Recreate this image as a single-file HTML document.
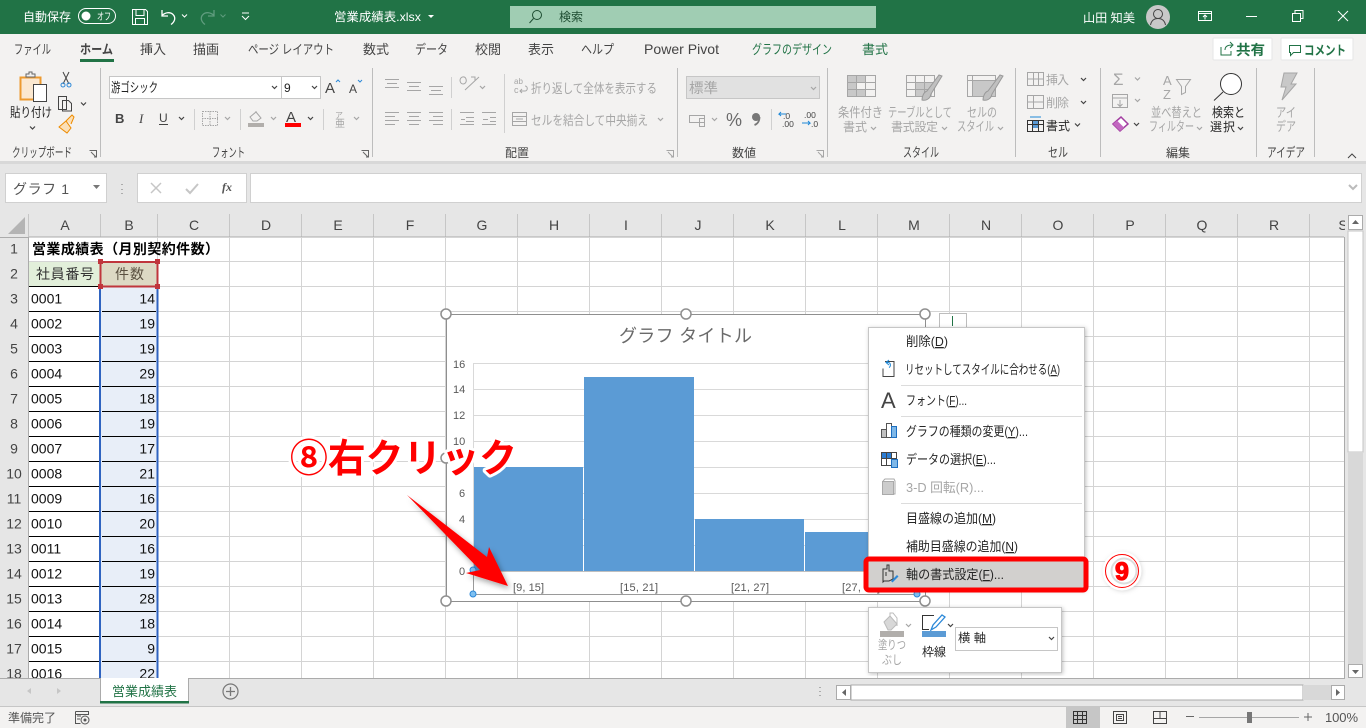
<!DOCTYPE html>
<html lang="ja"><head><meta charset="utf-8"><title>営業成績表.xlsx</title>
<style>
html,body{margin:0;padding:0;width:1366px;height:728px;overflow:hidden;background:#fff}
svg{display:block}
text{font-family:"Liberation Sans","Noto Sans CJK JP",sans-serif;font-size:12px;fill:#444;white-space:pre}
text.n{font-size:13px}
.w text,text.w{fill:#fff}
.g text{fill:#a6a6a6}
.k text{fill:#262626}
.h text{font-size:14px;fill:#444;text-anchor:middle}
.c text{font-size:14px;fill:#111}
.r text{font-size:14px;fill:#111;text-anchor:end}
.m text{fill:#262626;font-size:13px}
.y text{font-size:11px;fill:#595959}
.ic{fill:none;stroke:#a6a6a6;stroke-width:1}
.ik{fill:none;stroke:#444;stroke-width:1}
.ch{fill:none;stroke:#444;stroke-width:1.2}
.cg{fill:none;stroke:#a6a6a6;stroke-width:1.2}
.ann{font-weight:700;fill:#f00;stroke:#fff;stroke-width:6px;paint-order:stroke;stroke-linejoin:round}
</style></head><body>
<svg width="1366" height="728" viewBox="0 0 1366 728" xmlns="http://www.w3.org/2000/svg">
<defs>
<filter id="ds" x="-20%" y="-20%" width="150%" height="150%"><feDropShadow dx="2" dy="3" stdDeviation="3" flood-color="#000" flood-opacity=".35"/></filter>
<filter id="ms" x="-5%" y="-5%" width="110%" height="110%"><feDropShadow dx="1" dy="1" stdDeviation="2" flood-color="#000" flood-opacity=".25"/></filter>
<filter id="rs" x="-10%" y="-10%" width="120%" height="120%"><feGaussianBlur stdDeviation="2.5"/></filter>
</defs>

<!-- sheet background -->
<rect width="1366" height="728" fill="#e6e6e6"/>
<rect x="29" y="237" width="1316" height="441" fill="#fff"/>

<!-- title bar -->
<rect width="1366" height="34" fill="#217346"/>
<g class="w">
<text x="23" y="21" textLength="48" lengthAdjust="spacingAndGlyphs">自動保存</text>
<rect x="78.500" y="8.500" width="37" height="15" rx="7.500" fill="none" stroke="#fff"/>
<circle cx="86" cy="16" r="4.500" fill="#fff"/>
<text x="97" y="20" textLength="14" lengthAdjust="spacingAndGlyphs" style="font-size:10px">オフ</text>
<path d="M132.500 9.500h13l2 2v13h-15zM136 9.500v6h8v-6M135.500 24.500v-6h9v6" fill="none" stroke="#fff"/>
<path d="M162 10v6h6M162 15.500c3-3 8-4 11-1 3 3 2 7-2 10" fill="none" stroke="#fff" stroke-width="1.300"/>
<path d="M182 14.500l2.500 2.500 2.500-2.500" fill="none" stroke="#fff"/>
<path d="M214 10v6h-6M214 15.500c-3-3-8-4-11-1-3 3-2 7 2 10" fill="none" stroke="#5f9c7e" stroke-width="1.300"/>
<path d="M220.500 14.500l2.500 2.500 2.500-2.500" fill="none" stroke="#5f9c7e"/>
<path d="M242 13h7M242 16l3.500 3.500 3.500-3.500" fill="none" stroke="#fff"/>
<text x="334" y="21" textLength="87" lengthAdjust="spacingAndGlyphs">営業成績表.xlsx</text>
<path d="M428 15h6l-3 3z" fill="#fff"/>
<text x="1083" y="22" textLength="52" lengthAdjust="spacingAndGlyphs">山田 知美</text>
</g>
<rect x="510" y="6" width="366" height="22" fill="#a0cdb3"/>
<circle cx="537" cy="15" r="4.500" fill="none" stroke="#1e4d32"/>
<path d="M533.500 18.500l-4 4.500" stroke="#1e4d32" fill="none"/>
<text x="559" y="21" textLength="24" style="fill:#1e4d32">検索</text>
<circle cx="1158" cy="17" r="12" fill="#c8c8c8"/>
<circle cx="1158" cy="14" r="4.500" fill="none" stroke="#444"/>
<path d="M1150.500 25c1-5 4-6.500 7.500-6.500s6.500 1.500 7.500 6.500" fill="none" stroke="#444"/>
<g fill="none" stroke="#fff">
<path d="M1198.500 11.500h13v9h-13zM1198.500 13.500h13M1205 19.500v-4M1203 17l2-2 2 2"/>
<path d="M1246 16.500h11"/>
<path d="M1292.500 13.500h8v8h-8zM1295 13v-2.500h8v8h-2.500"/>
<path d="M1338 11l10 10M1348 11l-10 10"/>
</g>

<!-- ribbon -->
<rect y="34" width="1366" height="127" fill="#f3f2f1"/>
<rect y="161" width="1366" height="3" fill="#d8d8d8"/>
<text class="n" x="14" y="54" textLength="37" lengthAdjust="spacingAndGlyphs">ファイル</text>
<text class="n" x="80" y="54" textLength="33" lengthAdjust="spacingAndGlyphs" style="font-weight:700">ホーム</text>
<rect x="80" y="59" width="34" height="3" fill="#217346"/>
<text class="n" x="140" y="54" textLength="26">挿入</text>
<text class="n" x="193" y="54" textLength="26">描画</text>
<text class="n" x="248" y="54" textLength="86" lengthAdjust="spacingAndGlyphs">ページ レイアウト</text>
<text class="n" x="363" y="54" textLength="26">数式</text>
<text class="n" x="415" y="54" textLength="33" lengthAdjust="spacingAndGlyphs">データ</text>
<text class="n" x="475" y="54" textLength="26">校閲</text>
<text class="n" x="528" y="54" textLength="26">表示</text>
<text class="n" x="581" y="54" textLength="33" lengthAdjust="spacingAndGlyphs">ヘルプ</text>
<text x="644" y="54" textLength="75" lengthAdjust="spacingAndGlyphs" style="font-size:14px">Power Pivot</text>
<text class="n" x="752" y="54" textLength="80" lengthAdjust="spacingAndGlyphs" style="fill:#217346">グラフのデザイン</text>
<text class="n" x="862" y="54" textLength="26" style="fill:#217346">書式</text>

<!-- share / comment -->
<rect x="1213" y="38" width="59" height="22" rx="1" fill="#fff" stroke="#e6e6e6"/>
<rect x="1281" y="38" width="72" height="22" rx="1" fill="#fff" stroke="#e6e6e6"/>
<path d="M1221 47v8h10v-4M1225 50c0-3 2-5 7-5M1230 42l3 3-3 3" fill="none" stroke="#217346"/>
<text x="1236" y="55" textLength="29" lengthAdjust="spacingAndGlyphs" style="font-weight:700;fill:#217346;font-size:14px">共有</text>
<path d="M1289.500 45.500h11v7h-7l-3 3v-3h-1z" fill="none" stroke="#217346"/>
<text x="1304" y="55" textLength="42" lengthAdjust="spacingAndGlyphs" style="font-weight:700;fill:#217346;font-size:13px">コメント</text>

<!-- group separators -->
<path d="M100.500 68v89M372.500 68v89M677.500 68v89M827.500 68v89M1015.500 68v89M1100.500 68v89M1256.500 68v89M1314.500 68v89" stroke="#bdbdbd" fill="none"/>
<path d="M194.500 109v21M240.500 109v21M323.500 109v21M451.500 77v21M451.500 109v21M504.500 74v59M771.500 109v21" stroke="#d0d0d0" fill="none"/>

<!-- group labels -->
<text class="n" x="12" y="157" textLength="60" lengthAdjust="spacingAndGlyphs">クリップボード</text>
<text class="n" x="212" y="157" textLength="33" lengthAdjust="spacingAndGlyphs">フォント</text>
<text x="505" y="157" textLength="24">配置</text>
<text x="732" y="157" textLength="24">数値</text>
<text class="n" x="903" y="157" textLength="36" lengthAdjust="spacingAndGlyphs">スタイル</text>
<text class="n" x="1048" y="157" textLength="20" lengthAdjust="spacingAndGlyphs">セル</text>
<text x="1166" y="157" textLength="24">編集</text>
<text class="n" x="1267" y="157" textLength="38" lengthAdjust="spacingAndGlyphs">アイデア</text>
<g class="ik" stroke="#666">
<path d="M89.500 150.500h7v7M91 152l5 5M94 157h2.500v-2.500" stroke="#666"/>
<path d="M361.500 150.500h7v7M363 152l5 5M366 157h2.500v-2.500" stroke="#666"/>
</g>
<path d="M666.500 150.500h7v7M668 152l5 5M671 157h2.500v-2.500" class="ic"/>
<path d="M816.500 150.500h7v7M818 152l5 5M821 157h2.500v-2.500" class="ic"/>
<path d="M1348 158l4-4 4 4" class="ik" stroke-width="1.200"/>

<!-- clipboard -->
<rect x="20.500" y="77.500" width="20" height="22" fill="#fbe8d0" stroke="#ed9a2f" stroke-width="2"/>
<path d="M26 77v-3h3v-2h3v2h3v3z" fill="#f3f2f1" stroke="#666"/>
<rect x="33.500" y="84.500" width="13" height="17" fill="#fff" stroke="#444"/>
<text class="n" x="10" y="117" textLength="42" lengthAdjust="spacingAndGlyphs" style="fill:#262626">貼り付け</text>
<path d="M30 126.500l2.500 2.500 2.500-2.500" class="ch"/>
<path d="M63 72l6 12M69 72l-6 12" fill="none" stroke="#444"/>
<circle cx="63" cy="85" r="2" fill="none" stroke="#2b88d8"/><circle cx="69" cy="85" r="2" fill="none" stroke="#2b88d8"/>
<path d="M58.500 96.500h8v13h-8zM62.500 100.500h6l3 3v7.500h-9z" fill="#f3f2f1" stroke="#444"/>
<path d="M81 102.500l2.500 2.500 2.500-2.500" class="ch"/>
<path d="M59 127l7-6 5 7-4 5zM66 121l6-6 2 2-3 7" fill="#fbe0b8" stroke="#ed8b00"/>

<!-- font -->
<rect x="109.500" y="76.500" width="172" height="22" fill="#fff" stroke="#c6c6c6"/>
<rect x="281.500" y="76.500" width="39" height="22" fill="#fff" stroke="#c6c6c6"/>
<text class="n" x="111" y="92" textLength="47" lengthAdjust="spacingAndGlyphs" style="fill:#222">游ゴシック</text>
<text x="284" y="92" style="fill:#222">9</text>
<path d="M272 86l2.500 2.500 2.500-2.500M312 86l2.500 2.500 2.500-2.500" class="ch"/>
<text x="325" y="93" style="font-size:15px">A</text>
<path d="M336 82l2-2 2 2" fill="none" stroke="#2b88d8"/>
<text x="349" y="93" style="font-size:12px">A</text>
<path d="M358 80l2 2 2-2" fill="none" stroke="#2b88d8"/>
<text x="115" y="123" style="font-weight:700;font-size:13px">B</text>
<text x="139" y="123" style="font-style:italic;font-family:'Liberation Serif',serif;font-size:13px">I</text>
<text x="159" y="122" style="font-size:12px">U</text>
<path d="M159 124.500h9" stroke="#444"/>
<path d="M179 117l2.500 2.500 2.500-2.500" class="ch"/>
<path d="M202.500 111.500h15v14h-15zM210 111v15M202 118.500h16" class="ic" stroke-dasharray="1.500 1"/>
<path d="M225 117l2.500 2.500 2.500-2.500" class="cg"/>
<path d="M250 117l6-5 5 6-4 3h-4zM256 112v-1" class="ic"/>
<rect x="248" y="123" width="16" height="4" fill="#b1aeab"/>
<path d="M271 117l2.500 2.500 2.500-2.500" class="cg"/>
<text x="286" y="122" style="font-size:15px">A</text>
<rect x="285" y="123" width="16" height="4" fill="#f00"/>
<path d="M308 117l2.500 2.500 2.500-2.500" class="ch"/>
<text x="335" y="118" style="font-size:8px;fill:#a6a6a6">ア</text>
<text x="335" y="127" style="font-size:10px;fill:#a6a6a6">亜</text>
<path d="M354 117l2.500 2.500 2.500-2.500" class="cg"/>

<!-- alignment -->
<path class="ic" stroke="#999" d="M385 79.500h14M387 83.500h10M385 87.500h14M407 82.500h14M409 86.500h10M407 90.500h14M429 86.500h14M431 90.500h10M429 94.500h14M385 112.500h14M385 116.500h10M385 120.500h14M385 124.500h10M407 112.500h14M409 116.500h10M407 120.500h14M409 124.500h10M429 112.500h14M433 116.500h10M429 120.500h14M433 124.500h10M460 112.500h14M466 117.500h8M466 121.500h8M460 124.500h14M461 119.500h4M482 112.500h14M490 117.500h6M490 121.500h6M482 124.500h14M483 119.500h5"/>
<path class="ic" d="M465 90l14-13M471 77h4v4M460 80c1-4 5-4 6-1s-1 5-3 5-3-2-3-4"/>
<path class="cg" d="M480 86l2.500 2.500 2.500-2.500"/>
<g class="g">
<text x="514" y="84" style="font-size:8px">ab</text>
<text x="514" y="93" style="font-size:9px">c</text>
<path class="ic" d="M520 91h5c3 0 3-5 0-5M522 89l-2 2 2 2"/>
<text class="n" x="531" y="93" textLength="126" lengthAdjust="spacingAndGlyphs">折り返して全体を表示する</text>
<path class="ic" stroke-width="2" d="M512.500 112.500h14v13h-14zM513 116.500h13M513 121.500h13M516 119h7"/>
<text class="n" x="531" y="125" textLength="117" lengthAdjust="spacingAndGlyphs">セルを結合して中央揃え</text>
<path class="cg" d="M658 118l2.500 2.500 2.500-2.500"/>
</g>

<!-- number -->
<rect x="686.500" y="76.500" width="133" height="22" fill="#e1e1e1" stroke="#c6c6c6"/>
<text x="689" y="93" textLength="29" lengthAdjust="spacingAndGlyphs" style="fill:#a6a6a6;font-size:14px">標準</text>
<path class="cg" d="M811 87l2.500 2.500 2.500-2.500"/>
<path class="ic" d="M689.500 115.500h15v7h-15zM699.500 118.500h5v8h-5z"/>
<path class="cg" d="M712 118l2.500 2.500 2.500-2.500"/>
<text x="726" y="126" style="font-size:18px;fill:#6a6a6a">%</text>
<circle cx="756" cy="117" r="4" fill="#777"/>
<path d="M759.500 117c0 4-2 7-5 8" fill="none" stroke="#777" stroke-width="1.800"/>
<text x="783" y="119" style="font-size:8.500px;fill:#444">.0</text>
<text x="782" y="127" style="font-size:8.500px;fill:#444">.00</text>
<path d="M786 114h-7l2-2M779 114l2 2" fill="none" stroke="#1e88d8"/>
<text x="804" y="118" style="font-size:8.500px;fill:#444">.00</text>
<text x="811" y="127" style="font-size:8.500px;fill:#444">.0</text>
<path d="M802 123h8l-2-2M810 123l-2 2" fill="none" stroke="#1e88d8"/>

<!-- styles -->
<path d="M848 76h18v6h-18zM848 83h9v6h-9zM848 90h18v6h-18zM857 76h9v6h-9z" fill="#c8c8c8"/>
<g class="ic" stroke="#999">
<rect x="847.500" y="75.500" width="28" height="21" />
<path d="M847 82.500h28M847 89.500h28M856.500 75v21M865.500 75v21"/>
</g>
<rect x="916" y="83" width="16" height="13" fill="#c8c8c8"/>
<g class="ic" stroke="#999">
<rect x="906.500" y="75.500" width="28" height="21"/>
<path d="M906 82.500h28M906 89.500h28M915.500 75v21M924.500 75v21"/>
</g>
<path d="M922 100c4 1 8-1 9-6l11-18-3-1-12 16c-3 1-5 5-5 9z" fill="#c0c0c0" stroke="#999"/>
<rect x="973" y="81" width="22" height="15" fill="#c8c8c8"/>
<g class="ic" stroke="#999"><rect x="967.500" y="75.500" width="28" height="21"/><path d="M967 80.500h28M972.500 75v21"/></g>
<path d="M983 100c4 1 8-1 9-6l11-18-3-1-12 16c-3 1-5 5-5 9z" fill="#c0c0c0" stroke="#999"/>
<g class="g">
<text class="n" x="838" y="117" textLength="45" lengthAdjust="spacingAndGlyphs">条件付き</text>
<text x="843" y="131" textLength="24">書式</text>
<path class="cg" d="M871 127l2.500 2.500 2.500-2.500"/>
<text class="n" x="888" y="117" textLength="64" lengthAdjust="spacingAndGlyphs">テーブルとして</text>
<text x="891" y="131" textLength="47">書式設定</text>
<path class="cg" d="M942 127l2.500 2.500 2.500-2.500"/>
<text class="n" x="967" y="117" textLength="30" lengthAdjust="spacingAndGlyphs">セルの</text>
<text class="n" x="957" y="131" textLength="37" lengthAdjust="spacingAndGlyphs">スタイル</text>
<path class="cg" d="M998 127l2.500 2.500 2.500-2.500"/>
</g>

<!-- cells -->
<path class="ic" d="M1027.500 72.500h16v13h-16zM1033.500 72v13M1038.500 72v13M1027 79h16" stroke="#999"/>
<text x="1046" y="84" textLength="23" style="fill:#a6a6a6">挿入</text>
<path class="ch" d="M1081 78l2.500 2.500 2.500-2.500"/>
<path class="ic" d="M1027.500 95.500h16v13h-16zM1033.500 95v13M1027 102h16" stroke="#999"/>
<text x="1046" y="107" textLength="23" style="fill:#a6a6a6">削除</text>
<path class="ch" d="M1081 101l2.500 2.500 2.500-2.500"/>
<rect x="1033" y="121" width="5" height="7" fill="#5b9bd5"/>
<path d="M1027.500 120.500h16v11h-16zM1027 124.500h16M1032.500 120v12M1038.500 120v12" fill="none" stroke="#333"/>
<path d="M1030 117h11" stroke="#1e88d8"/>
<text x="1046" y="130" textLength="24" style="fill:#262626">書式</text>
<path class="ch" d="M1075 123.500l2.500 2.500 2.500-2.500"/>

<!-- editing -->
<text x="1113" y="85" style="font-size:17px;fill:#a6a6a6">Σ</text>
<path class="cg" d="M1135 77.500l2.500 2.500 2.500-2.500"/>
<path class="ic" d="M1112.500 94.500h15v13h-15zM1112 98h16M1120 100v6M1117.500 104l2.500 2.500 2.500-2.500"/>
<path class="cg" d="M1135 99l2.500 2.500 2.500-2.500"/>
<path d="M1113 124l8-7 7 7-8 7z" fill="#fff" stroke="#a33ea1" stroke-width="1.500"/>
<path d="M1113 124l4-3.500 7 7-4 3.500z" fill="#c268c0"/>
<path class="ch" d="M1134 123l2.500 2.500 2.500-2.500"/>
<text x="1163" y="85" style="font-size:13px;fill:#a6a6a6">A</text>
<text x="1163" y="99" style="font-size:13px;fill:#a6a6a6">Z</text>
<path class="ic" d="M1176.500 79.500h14l-5 7v6l-4 2v-8z"/>
<g class="g">
<text class="n" x="1151" y="117" textLength="51" lengthAdjust="spacingAndGlyphs">並べ替えと</text>
<text class="n" x="1149" y="131" textLength="45" lengthAdjust="spacingAndGlyphs">フィルター</text>
<path class="cg" d="M1197 127l2.500 2.500 2.500-2.500"/>
</g>
<circle cx="1231" cy="84" r="10.500" fill="#fff" stroke="#333"/>
<path d="M1223 92l-9 8.500" stroke="#333" fill="none"/>
<text class="n" x="1212" y="117" textLength="33" style="fill:#262626" lengthAdjust="spacingAndGlyphs">検索と</text>
<text x="1210" y="131" textLength="25" style="fill:#262626">選択</text>
<path class="ch" d="M1238 127l2.500 2.500 2.500-2.500"/>
<path d="M1284 73h13l-6 11h5l-14 16 4-13h-5z" fill="#c8c8c8" stroke="#a6a6a6"/>
<g class="g">
<text class="n" x="1276" y="117" textLength="20" lengthAdjust="spacingAndGlyphs">アイ</text>
<text class="n" x="1276" y="131" textLength="20" lengthAdjust="spacingAndGlyphs">デア</text>
</g>

<!-- formula bar -->
<rect x="5.500" y="173.500" width="101" height="29" fill="#fff" stroke="#d0d0d0"/>
<text x="13" y="194" textLength="56" style="font-size:14px;fill:#555" lengthAdjust="spacing">グラフ 1</text>
<path d="M93 185h7l-3.500 4z" fill="#777"/>
<path d="M122 184v1M122 189v1M122 193v1" stroke="#999" fill="none" stroke-width="1.500"/>
<rect x="137.500" y="173.500" width="109" height="29" fill="#fff" stroke="#d0d0d0"/>
<rect x="250.500" y="173.500" width="1111" height="29" fill="#fff" stroke="#d0d0d0"/>
<path d="M151 183l10 10M161 183l-10 10" stroke="#c6c6c6" stroke-width="1.500" fill="none"/>
<path d="M186 189l4 4 8-9" stroke="#c6c6c6" stroke-width="2" fill="none"/>
<text x="222" y="191" style="font-family:'Liberation Serif',serif;font-style:italic;font-weight:700;font-size:12px;fill:#555">fx</text>
<path d="M1349 185l4 4 4-4" stroke="#bbb" stroke-width="2" fill="none"/>

<!-- headers -->
<path d="M25 217v17H8z" fill="#b4b4b4"/>
<path d="M28.500 214v23M100.500 214v23M157.500 214v23M229.500 214v23M301.500 214v23M373.500 214v23M445.500 214v23M517.500 214v23M589.500 214v23M661.500 214v23M733.500 214v23M805.500 214v23M877.500 214v23M949.500 214v23M1021.500 214v23M1093.500 214v23M1165.500 214v23M1237.500 214v23M1309.500 214v23" stroke="#c6c6c6" fill="none"/>
<g class="h">
<text x="65" y="230">A</text><text x="129" y="230">B</text><text x="194" y="230">C</text><text x="266" y="230">D</text><text x="338" y="230">E</text><text x="410" y="230">F</text><text x="482" y="230">G</text><text x="554" y="230">H</text><text x="626" y="230">I</text><text x="698" y="230">J</text><text x="770" y="230">K</text><text x="842" y="230">L</text><text x="914" y="230">M</text><text x="986" y="230">N</text><text x="1058" y="230">O</text><text x="1130" y="230">P</text><text x="1202" y="230">Q</text><text x="1274" y="230">R</text><text x="1343" y="230">S</text>
</g>
<g class="h" transform="translate(0,-1.500)">
<text x="14" y="255">1</text><text x="14" y="280">2</text><text x="14" y="305">3</text><text x="14" y="330">4</text><text x="14" y="355">5</text><text x="14" y="380">6</text><text x="14" y="405">7</text><text x="14" y="430">8</text><text x="14" y="455">9</text><text x="14" y="480">10</text><text x="14" y="505">11</text><text x="14" y="530">12</text><text x="14" y="555">13</text><text x="14" y="580">14</text><text x="14" y="605">15</text><text x="14" y="630">16</text><text x="14" y="655">17</text><text x="14" y="680">18</text>
</g>
<path d="M0 237.500h29M29 237h1315" stroke="#ababab" fill="none"/>
<path d="M28.500 237v441" stroke="#ababab" fill="none"/>
<path d="M1344.500 237v441" stroke="#ababab" fill="none"/>

<!-- sheet grid -->
<path stroke="#d4d4d4" fill="none" d="M29 261.500h1315M29 286.500h1315M29 311.500h1315M29 336.500h1315M29 361.500h1315M29 386.500h1315M29 411.500h1315M29 436.500h1315M29 461.500h1315M29 486.500h1315M29 511.500h1315M29 536.500h1315M29 561.500h1315M29 586.500h1315M29 611.500h1315M29 636.500h1315M29 661.500h1315M229.500 237v441M301.500 237v441M373.500 237v441M445.500 237v441M517.500 237v441M589.500 237v441M661.500 237v441M733.500 237v441M805.500 237v441M877.500 237v441M949.500 237v441M1021.500 237v441M1093.500 237v441M1165.500 237v441M1237.500 237v441M1309.500 237v441M157.500 237v25"/>
<rect x="29" y="262" width="71" height="25" fill="#e2efda"/>
<rect x="101" y="287" width="56" height="391" fill="#e8eef8"/>
<path stroke="#000" fill="none" d="M29 286.500h70M29 311.500h70M29 336.500h70M29 361.500h70M29 386.500h70M29 411.500h70M29 436.500h70M29 461.500h70M29 486.500h70M29 511.500h70M29 536.500h70M29 561.500h70M29 586.500h70M29 611.500h70M29 636.500h70M29 661.500h70M102 311.500h54M102 336.500h54M102 361.500h54M102 386.500h54M102 411.500h54M102 436.500h54M102 461.500h54M102 486.500h54M102 511.500h54M102 536.500h54M102 561.500h54M102 586.500h54M102 611.500h54M102 636.500h54M102 661.500h54"/>
<path d="M100 287v391M157.500 287v391" stroke="#2f63c0" stroke-width="2" fill="none"/>
<rect x="100.500" y="262" width="57" height="24.500" fill="#ddd9c4" stroke="#c0353c" stroke-width="2"/>
<path d="M98 259h5v5h-5zM155 259h5v5h-5zM98 284h5v5h-5zM155 284h5v5h-5z" fill="#c0353c"/>
<text x="32" y="254" textLength="187" style="font-size:14px;font-weight:700;fill:#000">営業成績表（月別契約件数）</text>
<text x="36" y="279" textLength="58" style="font-size:14px;fill:#333">社員番号</text>
<text x="115" y="279" textLength="29" style="font-size:14px;fill:#5a5040">件数</text>
<g class="c" transform="translate(0,-1.500)">
<text x="31" y="305">0001</text><text x="31" y="330">0002</text><text x="31" y="355">0003</text><text x="31" y="380">0004</text><text x="31" y="405">0005</text><text x="31" y="430">0006</text><text x="31" y="455">0007</text><text x="31" y="480">0008</text><text x="31" y="505">0009</text><text x="31" y="530">0010</text><text x="31" y="555">0011</text><text x="31" y="580">0012</text><text x="31" y="605">0013</text><text x="31" y="630">0014</text><text x="31" y="655">0015</text><text x="31" y="680">0016</text>
</g>
<g class="r" transform="translate(0,-1.500)">
<text x="155" y="305">14</text><text x="155" y="330">19</text><text x="155" y="355">19</text><text x="155" y="380">29</text><text x="155" y="405">18</text><text x="155" y="430">19</text><text x="155" y="455">17</text><text x="155" y="480">21</text><text x="155" y="505">16</text><text x="155" y="530">20</text><text x="155" y="555">16</text><text x="155" y="580">19</text><text x="155" y="605">28</text><text x="155" y="630">18</text><text x="155" y="655">9</text><text x="155" y="680">22</text>
</g>

<!-- chart -->
<rect x="446.500" y="314.500" width="479" height="287" fill="#fff" stroke="#8f8f8f" stroke-width="1"/>
<rect x="939.500" y="313.500" width="27" height="20" fill="#fff" stroke="#bdbdbd"/>
<path d="M952.500 316v10" stroke="#217346" fill="none"/>
<text x="619" y="342" textLength="133" style="font-size:18px;fill:#6a6a6a">グラフ タイトル</text>
<path stroke="#d9d9d9" fill="none" d="M473 363.500h400M473 389.500h400M473 415.500h400M473 441.500h400M473 467.500h400M473 493.500h400M473 519.500h400M473 545.500h400M473.500 363v208"/>
<path d="M474 467h109v104H474zM584 377h110v194H584zM695 519h109v52H695zM805 532h70v39h-70z" fill="#5b9bd5"/>
<path d="M473 571.500h400" stroke="#bfbfbf" fill="none"/>
<g class="y">
<text x="453" y="368">16</text><text x="453" y="393">14</text><text x="453" y="419">12</text><text x="453" y="445">10</text><text x="459" y="497">6</text><text x="459" y="523">4</text><text x="459" y="575">0</text>
<text x="513" y="591" textLength="31">[9, 15]</text><text x="620" y="591" textLength="38">[15, 21]</text><text x="731" y="591" textLength="38">[21, 27]</text><text x="842" y="591" textLength="38">[27, 33]</text>
</g>
<path d="M473.500 571v23.500H917" fill="none" stroke="#9a9a9a"/>
<g fill="#fff" stroke="#8f8f8f" stroke-width="1.500">
<circle cx="446" cy="314" r="5"/><circle cx="686" cy="314" r="5"/><circle cx="925" cy="314" r="5"/>
<circle cx="446" cy="458" r="5"/><circle cx="925" cy="458" r="5"/>
<circle cx="446" cy="601" r="5"/><circle cx="686" cy="601" r="5"/><circle cx="925" cy="601" r="5"/>
</g>
<g fill="#7fc0f0" stroke="#2b88d8"><circle cx="473" cy="594" r="3"/><circle cx="917" cy="594" r="3"/><circle cx="473" cy="570" r="3"/></g>

<!-- annotation -->
<path d="M407 495L487 557 489 547 508 586 466 573 480 570z" fill="#f00" filter="url(#ds)"/>
<text class="ann" x="290" y="472" textLength="227" lengthAdjust="spacingAndGlyphs" style="font-size:39px;fill:#f00">⑧右クリック</text>

<!-- context menu -->
<rect x="868.500" y="327.500" width="216" height="262" fill="#fff" stroke="#c6c6c6" filter="url(#ms)"/>
<g class="m">
<text x="906" y="346" textLength="42" lengthAdjust="spacingAndGlyphs">削除(<tspan text-decoration="underline">D</tspan>)</text>
<text x="905" y="374" textLength="155" lengthAdjust="spacingAndGlyphs">リセットしてスタイルに合わせる(<tspan text-decoration="underline">A</tspan>)</text>
<text x="906" y="405" textLength="61" lengthAdjust="spacingAndGlyphs">フォント(<tspan text-decoration="underline">F</tspan>)...</text>
<text x="906" y="436" textLength="122" lengthAdjust="spacingAndGlyphs">グラフの種類の変更(<tspan text-decoration="underline">Y</tspan>)...</text>
<text x="906" y="464" textLength="90" lengthAdjust="spacingAndGlyphs">データの選択(<tspan text-decoration="underline">E</tspan>)...</text>
<text x="906" y="492" textLength="78" lengthAdjust="spacingAndGlyphs" style="fill:#a6a6a6">3-D 回転(R)...</text>
<text x="906" y="523" textLength="90" lengthAdjust="spacingAndGlyphs">目盛線の追加(<tspan text-decoration="underline">M</tspan>)</text>
<text x="906" y="551" textLength="112" lengthAdjust="spacingAndGlyphs">補助目盛線の追加(<tspan text-decoration="underline">N</tspan>)</text>
</g>
<path d="M901 385.500h181M901 416.500h181M901 503.500h181" stroke="#dcdcdc" fill="none"/>
<path d="M885 361.500h9v15h-11v-8" fill="none" stroke="#444"/>
<path d="M889 360l-3 2.500 3 2.500M886 362.500h2c3 0 3 4 1 5" fill="none" stroke="#1e88d8"/>
<text x="881" y="408" style="font-size:22px;fill:#444">A</text>
<rect x="881.500" y="429.500" width="5" height="8" fill="#c0c0c0" stroke="#555"/>
<rect x="886.500" y="423.500" width="5" height="14" fill="#fff" stroke="#555"/>
<rect x="891.500" y="426.500" width="5" height="11" fill="#7fb8e8" stroke="#1e6fc0"/>
<rect x="881.500" y="452.500" width="15" height="13" fill="#fff" stroke="#444"/>
<path d="M882 453h9v5h-9z" fill="#2b7cd3"/>
<path d="M886.500 452v13M891.500 452v8M881 458.500h16" stroke="#444" fill="none"/>
<rect x="891.500" y="459.500" width="6" height="8" fill="#7fb8e8" stroke="#1e6fc0"/>
<path d="M882.500 481.500h11v13h-11z" fill="#ccc" stroke="#aaa"/>
<path d="M883 481l2-2h9l1 2v13h-2" fill="none" stroke="#aaa"/>

<!-- highlighted item -->
<rect x="868" y="561" width="216" height="28" fill="#d2d0ce"/>
<path d="M883 582v-13h4v-4h2v6h4v8l-4 2h-5zM886 572v4" fill="none" stroke="#333"/>
<path d="M891 581l6-6 1.500 1.500-6 6z" fill="#2b88d8"/>
<text x="906" y="579" textLength="98" lengthAdjust="spacingAndGlyphs" style="fill:#262626;font-size:13px">軸の書式設定(<tspan text-decoration="underline">F</tspan>)...</text>
<rect x="866" y="559" width="220" height="31" rx="3" fill="none" stroke="#f00" stroke-width="5"/>

<!-- circled 9 -->
<circle cx="1123" cy="572" r="19" fill="#aaa" filter="url(#rs)" opacity=".5"/>
<circle cx="1122" cy="571" r="19.500" fill="#fff"/>
<circle cx="1122" cy="571" r="16.500" fill="#fff" stroke="#f00" stroke-width="1"/>
<circle cx="1124" cy="571" r="12.500" fill="none" stroke="#ddd" stroke-width="2"/>
<text x="1122" y="580" text-anchor="middle" style="font-size:25px;font-weight:700;fill:#f00;stroke:#f00;stroke-width:1.200px">9</text>

<!-- mini toolbar -->
<rect x="868.500" y="607.500" width="193" height="65" fill="#fff" stroke="#c6c6c6" filter="url(#ms)"/>
<path d="M884 622l6-6 7 8-6 6h-3z" fill="#d8d8d8" stroke="#bbb"/>
<path d="M890 616v-3h3l4 5v8" fill="none" stroke="#bbb"/>
<rect x="880" y="631" width="24" height="6" fill="#b1aeab"/>
<path class="cg" d="M906 624l2.500 2.500 2.500-2.500"/>
<text x="878" y="649" textLength="28" style="fill:#a6a6a6" lengthAdjust="spacingAndGlyphs">塗りつ</text>
<text x="882" y="664" textLength="20" style="fill:#a6a6a6" lengthAdjust="spacingAndGlyphs">ぶし</text>
<path d="M934 615.500h-11.500v14H929" fill="none" stroke="#333"/>
<path d="M931 630l2-5 9-10 3 2-9 10z" fill="#fff" stroke="#2b88d8" stroke-width="1.300"/>
<rect x="922" y="631" width="24" height="6" fill="#5b9bd5"/>
<path class="ch" d="M948 624l2.500 2.500 2.500-2.500"/>
<text x="922" y="656" textLength="24" style="fill:#262626">枠線</text>
<rect x="955.500" y="627.500" width="102" height="23" fill="#fff" stroke="#c6c6c6"/>
<text x="958" y="642" textLength="28" style="fill:#262626" lengthAdjust="spacingAndGlyphs">横 軸</text>
<path class="ch" d="M1049 637l2.500 2.500 2.500-2.500"/>

<!-- vertical scrollbar -->
<rect x="1345" y="214" width="21" height="464" fill="#e6e6e6"/>
<rect x="1348" y="231" width="15" height="221" fill="#fff" stroke="#c6c6c6"/>
<rect x="1348" y="452" width="15" height="212" fill="#d8d8d8"/>
<rect x="1348.500" y="215.500" width="14" height="14" fill="#fff" stroke="#ababab"/>
<path d="M1352 224l3.500-4 3.500 4z" fill="#666"/>
<rect x="1348.500" y="664.500" width="14" height="13" fill="#fff" stroke="#ababab"/>
<path d="M1352 670h7l-3.500 4z" fill="#666"/>

<!-- tabs -->
<rect y="678" width="1366" height="28" fill="#e6e6e6"/>
<path d="M0 678.500h100M188 678.500h1157" stroke="#ababab" fill="none"/>
<rect x="100" y="678" width="88" height="25" fill="#fff"/>
<path d="M100.500 678v24M188.500 678v24" stroke="#ababab" fill="none"/>
<rect x="100" y="701" width="89" height="2.500" fill="#217346"/>
<text x="112" y="696" textLength="65" style="fill:#217346;font-size:13px">営業成績表</text>
<path d="M31 688v6l-4-3zM57 688v6l4-3z" fill="#c6c6c6"/>
<circle cx="230.500" cy="691.500" r="7.500" fill="none" stroke="#777" stroke-width="1.200"/>
<path d="M226 691.500h9M230.500 687v9" stroke="#777" stroke-width="1.300"/>
<path d="M820 687v1M820 691v1M820 695v1" stroke="#999" stroke-width="1.500"/>
<rect x="836.500" y="685.500" width="14" height="14" fill="#fff" stroke="#ababab"/>
<path d="M846 689v7l-4-3.500z" fill="#666"/>
<rect x="851" y="685" width="452" height="15" fill="#fff" stroke="#ababab"/>
<rect x="1303" y="685" width="28" height="15" fill="#d8d8d8"/>
<rect x="1331.500" y="685.500" width="13" height="14" fill="#fff" stroke="#ababab"/>
<path d="M1336 689v7l4-3.500z" fill="#666"/>

<!-- status bar -->
<rect y="706" width="1366" height="22" fill="#f3f2f1"/>
<path d="M0 706.500h1366" stroke="#c6c6c6" fill="none"/>
<text x="8" y="722" textLength="48" style="fill:#555">準備完了</text>
<path d="M75.500 711.500h13v3M75.500 711.500v12h5M77 716h4M77 719h3M75 714.500h14" fill="none" stroke="#555"/>
<circle cx="85" cy="720" r="4" fill="none" stroke="#555"/><circle cx="85" cy="720" r="1.500" fill="#555"/>
<rect x="1066" y="707" width="34" height="21" fill="#c6c6c6"/>
<path d="M1073.500 711.500h13v12h-13zM1073 715.500h14M1073 719.500h14M1077.500 711v13M1082.500 711v13" fill="none" stroke="#333"/>
<path d="M1113.500 711.500h13v12h-13zM1116.500 714.500h7v6h-7zM1118 716.500h4M1118 718.500h4" fill="none" stroke="#444"/>
<path d="M1153.500 711.500h13v12h-13zM1160 711.500v7h-6.500M1160 718.500h6" fill="none" stroke="#444"/>
<path d="M1186 716.500h8M1304 717h8M1308 713v8" stroke="#666" fill="none"/>
<path d="M1199 717.500h100" stroke="#a6a6a6" fill="none"/>
<rect x="1247" y="712" width="5" height="11" fill="#777"/>
<text x="1325" y="722" textLength="33" style="fill:#555;font-size:13px">100%</text>
</svg>
</body></html>
